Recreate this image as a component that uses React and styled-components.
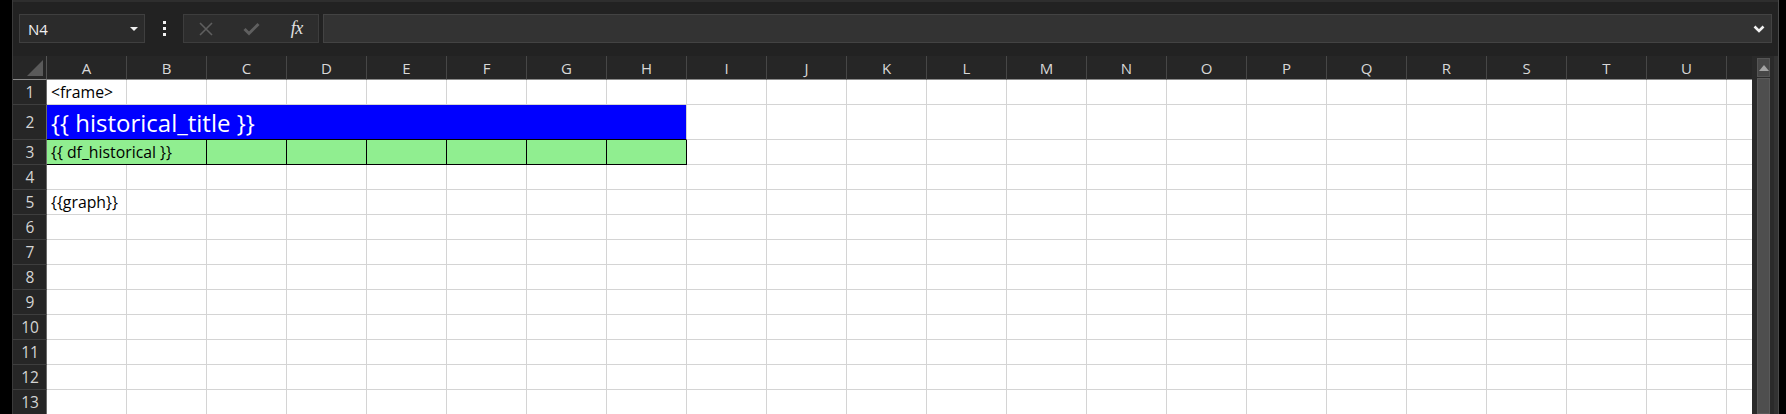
import React from 'react';
import styled, { createGlobalStyle } from 'styled-components';

const Global = createGlobalStyle`
  html, body { margin: 0; padding: 0; background: #000; overflow: hidden; }
  body { width: 1786px; height: 414px; font-family: "Open Sans", "Noto Sans", sans-serif; }
  * { box-sizing: border-box; }
`;

const COLS = 'ABCDEFGHIJKLMNOPQRSTU'.split('');
const GRID = '#d4d4d4';

const Window = styled.div`
  display: flex;
  width: 1786px;
  height: 414px;
  overflow: hidden;
  background: #000;
`;

const LeftEdge = styled.div`
  width: 13px;
  flex: none;
  background: #000;
  border-right: 1px solid #3a3a3a;
`;

const RightEdge = styled.div`
  width: 8px;
  flex: none;
  background: #000;
  border-left: 1px solid #4a4a4a;
`;

const Main = styled.div`
  flex: 1;
  min-width: 0;
  display: flex;
  flex-direction: column;
  background: #222222;
`;

const TopStrip = styled.div`
  height: 2px;
  flex: none;
  background: #2e2e2e;
`;

const Toolbar = styled.div`
  display: flex;
  align-items: center;
  height: 54px;
  flex: none;
  padding: 12px 6px 13px 6px;
`;

const NameBox = styled.div`
  width: 126px;
  height: 29px;
  display: flex;
  align-items: center;
  justify-content: space-between;
  padding: 0 6px 0 8px;
  background: #2b2b2b;
  border: 1px solid #3f3f3f;
  color: #f0f0f0;
  font-size: 15px;
`;

const Caret = styled.span`
  width: 0;
  height: 0;
  border-left: 4px solid transparent;
  border-right: 4px solid transparent;
  border-top: 4px solid #f0f0f0;
`;

const DotsWrap = styled.div`
  width: 38px;
  height: 29px;
  display: flex;
  flex-direction: column;
  align-items: center;
  justify-content: center;
  gap: 3px;
`;

const Dot = styled.span`
  width: 3px;
  height: 3px;
  background: #f2f2f2;
`;

const ButtonsBox = styled.div`
  width: 136px;
  height: 29px;
  display: flex;
  align-items: center;
  background: #2d2d2d;
  border: 1px solid #3d3d3d;
`;

const Slot = styled.div`
  width: 45px;
  height: 100%;
  display: flex;
  align-items: center;
  justify-content: center;
`;

const Fx = styled.span`
  font-family: "Liberation Serif", "DejaVu Serif", serif;
  font-style: italic;
  font-size: 18px;
  color: #e2e2e2;
  letter-spacing: -0.5px;
  margin-left: 2px;
`;

const FormulaBar = styled.div`
  flex: 1;
  height: 29px;
  margin-left: 4px;
  display: flex;
  align-items: center;
  justify-content: flex-end;
  padding-right: 6px;
  background: #333333;
  border: 1px solid #434343;
`;

const Sheet = styled.div`
  flex: 1;
  min-height: 0;
  display: flex;
`;

const Grid = styled.div`
  width: 1739px;
  flex: none;
  display: flex;
  flex-direction: column;
`;

const Row = styled.div`
  display: flex;
  flex: none;
  height: ${(p) => p.$h}px;
`;

const Corner = styled.div`
  width: 34px;
  height: 100%;
  position: relative;
  background: #262626;
  border-right: 1px solid #555;
  border-bottom: 1px solid #8a8a8a;
`;

const CornerTri = styled.svg`
  position: absolute;
  right: 3px;
  bottom: 3px;
`;

const ColHeader = styled.div`
  width: ${(p) => p.$w}px;
  height: 100%;
  display: flex;
  align-items: center;
  justify-content: center;
  background: #262626;
  color: #d8d8d8;
  font-size: 15px;
  border-right: ${(p) => (p.$last ? 'none' : '1px solid #474747')};
  border-bottom: 1px solid #8a8a8a;
`;

const RowHeader = styled.div`
  width: 34px;
  height: 100%;
  flex: none;
  display: flex;
  align-items: center;
  justify-content: center;
  padding-left: 1px;
  background: #262626;
  color: #d4d4d4;
  font-size: 15.5px;
  border-right: 1px solid #6a6a6a;
  border-bottom: 1px solid #3e3e3e;
`;

const Cell = styled.div`
  width: ${(p) => p.$w}px;
  height: 100%;
  flex: none;
  display: flex;
  align-items: flex-end;
  padding: 0 0 ${(p) => (p.$big ? 1 : 2)}px 4px;
  background: ${(p) => p.$fill || '#fff'};
  color: ${(p) => (p.$big ? '#fff' : '#000')};
  font-size: ${(p) => (p.$big ? 24 : 15.8)}px;
  line-height: 1.2;
  white-space: nowrap;
  border-right: ${(p) => (p.$br ? `1px solid ${p.$br}` : 'none')};
  border-bottom: 1px solid ${(p) => p.$bb || GRID};
`;

const Scrollbar = styled.div`
  width: 26px;
  flex: none;
  display: flex;
  flex-direction: column;
  padding: 2px 4px 0 5px;
  background: #2a2a2a;
  border-right: 4px solid #323232;
`;

const UpButton = styled.div`
  height: 19px;
  flex: none;
  display: flex;
  align-items: center;
  justify-content: center;
  background: #474747;
  border: 1px solid #555;
`;

const Thumb = styled.div`
  flex: 1;
  margin-top: 1px;
  background: #4e4e4e;
  border: 1px solid #5a5a5a;
`;

function buildRow(r) {
  const cells = [];
  if (r === 2) {
    cells.push({ w: 640, fill: '#0000ff', bb: '#000', br: GRID, big: true, text: '{{ historical_title }}' });
    for (let i = 8; i < 21; i++) cells.push({ w: 80, br: GRID });
  } else if (r === 3) {
    cells.push({ w: 160, fill: '#90ee90', bb: '#000', br: '#000', text: '{{ df_historical }}' });
    for (let i = 2; i < 8; i++) cells.push({ w: 80, fill: '#90ee90', bb: '#000', br: '#000' });
    for (let i = 8; i < 21; i++) cells.push({ w: 80, br: GRID });
  } else {
    const text = r === 1 ? '<frame>' : r === 5 ? '{{graph}}' : '';
    cells.push({ w: 80, br: GRID, text });
    for (let i = 1; i < 21; i++) cells.push({ w: 80, br: GRID });
  }
  cells.push({ w: 25 });
  return cells;
}

const ROWS = Array.from({ length: 13 }, (_, i) => i + 1);

export default function App() {
  return (
    <>
      <Global />
      <Window>
        <LeftEdge />
        <Main>
          <TopStrip />
          <Toolbar>
            <NameBox>
              <span>N4</span>
              <Caret />
            </NameBox>
            <DotsWrap>
              <Dot />
              <Dot />
              <Dot />
            </DotsWrap>
            <ButtonsBox>
              <Slot>
                <svg width="14" height="14" viewBox="0 0 14 14">
                  <path d="M1 1 L13 13 M13 1 L1 13" stroke="#5f5f5f" strokeWidth="1.6" fill="none" />
                </svg>
              </Slot>
              <Slot>
                <svg width="17" height="14" viewBox="0 0 17 14">
                  <path d="M1.5 7 L6 11.5 L15.5 2" stroke="#5f5f5f" strokeWidth="3" fill="none" />
                </svg>
              </Slot>
              <Slot>
                <Fx>fx</Fx>
              </Slot>
            </ButtonsBox>
            <FormulaBar>
              <svg width="12" height="8" viewBox="0 0 12 8">
                <path d="M1.5 1.5 L6 6 L10.5 1.5" stroke="#f2f2f2" strokeWidth="2.6" fill="none" />
              </svg>
            </FormulaBar>
          </Toolbar>
          <Sheet>
            <Grid>
              <Row $h={24}>
                <Corner>
                  <CornerTri width="16" height="16" viewBox="0 0 16 16">
                    <polygon points="16,0 16,16 0,16" fill="#5a5a5a" />
                  </CornerTri>
                </Corner>
                {COLS.map((c) => (
                  <ColHeader key={c} $w={80}>{c}</ColHeader>
                ))}
                <ColHeader $w={25} $last />
              </Row>
              {ROWS.map((r) => (
                <Row key={r} $h={r === 2 ? 35 : 25}>
                  <RowHeader>{r}</RowHeader>
                  {buildRow(r).map((c, i) => (
                    <Cell key={i} $w={c.w} $fill={c.fill} $bb={c.bb} $br={c.br} $big={c.big}>
                      {c.text}
                    </Cell>
                  ))}
                </Row>
              ))}
            </Grid>
            <Scrollbar>
              <UpButton>
                <svg width="10" height="6" viewBox="0 0 10 6">
                  <polygon points="0,6 10,6 5,0" fill="#a3a3a3" />
                </svg>
              </UpButton>
              <Thumb />
            </Scrollbar>
          </Sheet>
        </Main>
        <RightEdge />
      </Window>
    </>
  );
}
